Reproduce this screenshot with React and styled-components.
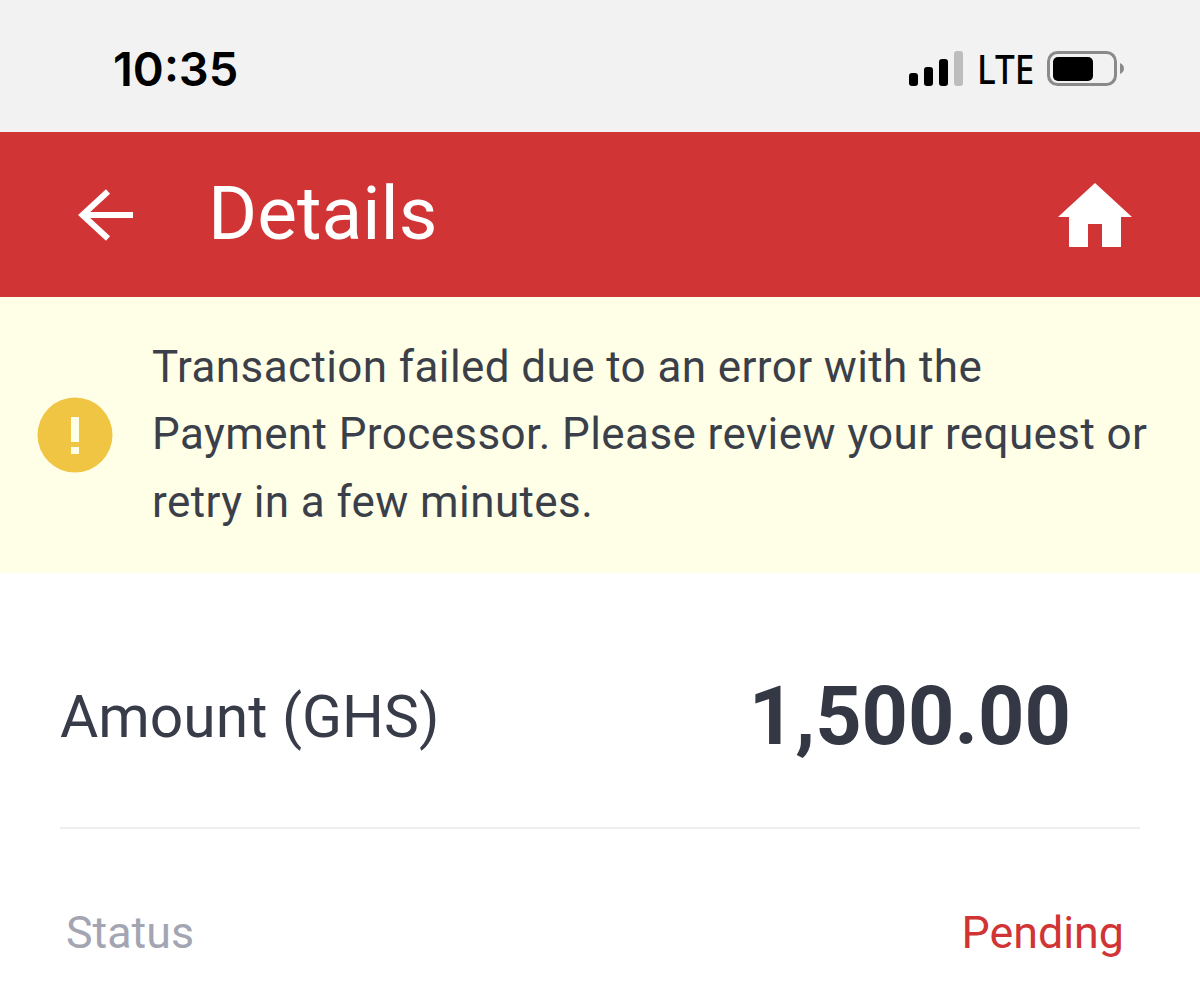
import React from "react";
import styled, { createGlobalStyle } from "styled-components";

const Global = createGlobalStyle`
  html, body { margin: 0; padding: 0; background: #fff; overflow: hidden; }
  body { font-family: Roboto, "Liberation Sans", sans-serif; }
`;

const Page = styled.div`
  width: 1200px;
  height: 991px;
  overflow: hidden;
  background: #fff;
`;

const StatusBar = styled.div`
  height: 132px;
  background: #f2f2f2;
  display: flex;
  align-items: center;
  justify-content: space-between;
  padding: 5px 76px 0 113px;
  box-sizing: border-box;
`;

const Clock = styled.div`
  font-family: Inter, Roboto, sans-serif;
  font-size: 47px;
  font-weight: 600;
  color: #000;
`;

const StatusIcons = styled.div`
  display: flex;
  align-items: center;
  gap: 14px;
`;

const Lte = styled.span`
  font-family: "Noto Sans", Roboto, sans-serif;
  font-size: 39px;
  font-weight: 500;
  line-height: 40px;
  color: #000;
  transform: scaleX(0.9);
  transform-origin: left center;
  width: 56px;
`;

const AppBar = styled.header`
  height: 165px;
  background: #d13434;
  display: flex;
  align-items: center;
  padding: 0 68px 0 78px;
  box-sizing: border-box;
  color: #fff;
`;

const Title = styled.h1`
  flex: 1;
  margin: -2px 0 0 73px;
  font-size: 75px;
  font-weight: 400;
  line-height: 1;
  color: #fff;
`;

const Alert = styled.div`
  height: 276px;
  background: #feffe6;
  display: flex;
  align-items: center;
  padding: 0 37px;
  gap: 39px;
  box-sizing: border-box;
`;

const AlertText = styled.p`
  margin: 0;
  font-size: 44px;
  letter-spacing: 0.4px;
  line-height: 67.5px;
  color: #3b3f4a;
  white-space: nowrap;
`;

const AmountRow = styled.div`
  margin: 0 60px;
  height: 256px;
  display: flex;
  align-items: center;
  justify-content: space-between;
  border-bottom: 2px solid #eeeeee;
  box-sizing: border-box;
  padding: 32px 69px 0 0;
`;

const AmountLabel = styled.span`
  font-size: 58.750px;
  color: #383c49;
`;

const AmountValue = styled.span`
  font-size: 81px;
  font-weight: 700;
  color: #343844;
`;

const StatusRow = styled.div`
  margin: 0 60px;
  padding: 76px 16px 0 6px;
  display: flex;
  justify-content: space-between;
  font-size: 44.800px;
  line-height: 56px;
`;

const StatusLabel = styled.span`
  color: #a3a5b2;
`;

const StatusValue = styled.span`
  color: #d13434;
`;

const SignalIcon = () => (
  <svg width="54" height="36" viewBox="0 0 54 36">
    <rect x="0" y="22" width="9" height="13" rx="3" fill="#000" />
    <rect x="15" y="16" width="9" height="19" rx="3" fill="#000" />
    <rect x="30" y="8" width="9" height="27" rx="3" fill="#000" />
    <rect x="45" y="0" width="9" height="35" rx="3" fill="#bdbdbd" />
  </svg>
);

const BatteryIcon = () => (
  <svg width="77" height="36" viewBox="0 0 77 36">
    <rect x="1.500" y="1.500" width="67" height="32" rx="9" fill="none" stroke="#8a8a8a" strokeWidth="3" />
    <rect x="6" y="6" width="40" height="24" rx="5" fill="#000" />
    <path d="M73 12c2.500 1 4 3 4 5.500s-1.500 4.500-4 5.500z" fill="#8a8a8a" />
  </svg>
);

const BackIcon = () => (
  <svg width="57" height="52" viewBox="0 0 57 52">
    <path d="M55 26H5M30 2.500 4.500 26 30 49.500" fill="none" stroke="#fff" strokeWidth="6" />
  </svg>
);

const HomeIcon = () => (
  <svg width="74" height="64" viewBox="0 0 74 64">
    <path d="M37 0 74 34H63V64H44V41H30V64H11V34H0Z" fill="#fff" />
  </svg>
);

const WarnIcon = () => (
  <svg width="76" height="76" viewBox="0 0 76 76" style={{ flex: "none" }}>
    <circle cx="38" cy="38" r="37.500" fill="#f1c544" />
    <rect x="34" y="20" width="8" height="25" fill="#feffe6" />
    <rect x="34" y="50" width="8" height="7" fill="#feffe6" />
  </svg>
);

export default function App() {
  return (
    <Page>
      <Global />
      <StatusBar>
        <Clock>10:35</Clock>
        <StatusIcons>
          <SignalIcon />
          <Lte>LTE</Lte>
          <BatteryIcon />
        </StatusIcons>
      </StatusBar>
      <AppBar>
        <BackIcon />
        <Title>Details</Title>
        <HomeIcon />
      </AppBar>
      <Alert>
        <WarnIcon />
        <AlertText>
          Transaction failed due to an error with the
          <br />
          Payment Processor. Please review your request or
          <br />
          retry in a few minutes.
        </AlertText>
      </Alert>
      <AmountRow>
        <AmountLabel>Amount (GHS)</AmountLabel>
        <AmountValue>1,500.00</AmountValue>
      </AmountRow>
      <StatusRow>
        <StatusLabel>Status</StatusLabel>
        <StatusValue>Pending</StatusValue>
      </StatusRow>
    </Page>
  );
}
